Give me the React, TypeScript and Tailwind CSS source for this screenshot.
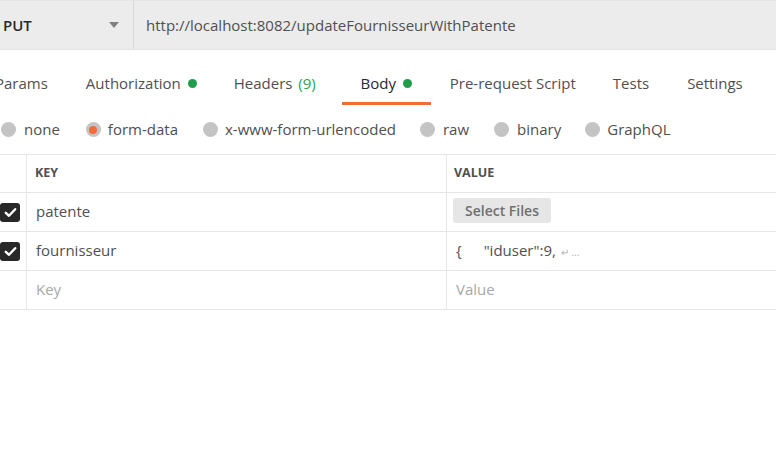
import React from "react";

function Radio({ selected }: { selected?: boolean }) {
  return (
    <span className="w-[15px] h-[15px] rounded-full bg-[#c4c4c4] flex items-center justify-center shrink-0">
      {selected && <span className="w-[8px] h-[8px] rounded-full bg-[#f26b3a]" />}
    </span>
  );
}

function Check() {
  return (
    <span className="w-[20px] h-[19px] rounded-[3px] bg-[#282828] flex items-center justify-center">
      <svg width="13" height="11" viewBox="0 0 13 11">
        <path d="M1.8 5.8 L5 8.8 L11.2 2.2" stroke="white" strokeWidth="2.4" fill="none" strokeLinecap="round" strokeLinejoin="round" />
      </svg>
    </span>
  );
}

function Row({ children, val, check }: { children: React.ReactNode; val: React.ReactNode; check?: boolean }) {
  return (
    <div className="flex h-[39px] border-b border-[#e6e6e6]">
      <div className="w-[27px] border-r border-[#e6e6e6] flex items-center">{check && <Check />}</div>
      <div className="w-[420px] border-r border-[#e6e6e6] flex items-center pl-[9px] pb-[2px]">{children}</div>
      <div className="flex-1 flex items-center pl-[6px] pb-[2px]">{val}</div>
    </div>
  );
}

export default function App() {
  return (
    <div className="w-[776px] h-[451px] bg-white overflow-hidden text-[15px] text-[#505050]" style={{ fontFamily: '"Open Sans", sans-serif' }}>
      <div className="h-[50px] bg-[#ececec] border-t border-[#e4e4e4] border-b border-[#d4d4d4] flex">
        <div className="w-[134px] border-r border-[#d9d9d9] flex items-center pl-[3px] pr-[14px]">
          <span className="text-[#282828] font-semibold text-[15px] flex-1">PUT</span>
          <svg width="10" height="6" viewBox="0 0 10 6"><path d="M0 0 H10 L5 6 Z" fill="#808080" /></svg>
        </div>
        <div className="flex items-center pl-[12px] text-[15px] text-[#505050]">http://localhost:8082/updateFournisseurWithPatente</div>
      </div>

      <div className="h-[54px] flex items-start pt-[22px] relative">
        <span className="ml-[-5px] leading-[22px]">Params</span>
        <span className="ml-[38px] leading-[22px] flex items-center">Authorization<span className="ml-[7px] w-[9px] h-[9px] rounded-full bg-[#1f9d4c]" /></span>
        <span className="ml-[37px] leading-[22px]">Headers <span className="ml-[2px] text-[#26a652]">(9)</span></span>
        <div className="ml-[26px] w-[89px] flex flex-col items-center">
          <span className="leading-[22px] text-[#282828] flex items-center">Body<span className="ml-[7px] w-[9px] h-[9px] rounded-full bg-[#1f9d4c]" /></span>
          <span className="mt-[8px] h-[3px] w-full bg-[#f26b3a]" />
        </div>
        <span className="ml-[19px] leading-[22px]">Pre-request Script</span>
        <span className="ml-[37px] leading-[22px]">Tests</span>
        <span className="ml-[38px] leading-[22px]">Settings</span>
      </div>

      <div className="h-[50px] flex items-center pt-[1px]">
        <span className="ml-[1px]"><Radio /></span>
        <span className="ml-[8px]">none</span>
        <span className="ml-[26px]"><Radio selected /></span>
        <span className="ml-[7px]">form-data</span>
        <span className="ml-[25px]"><Radio /></span>
        <span className="ml-[7px]">x-www-form-urlencoded</span>
        <span className="ml-[24px]"><Radio /></span>
        <span className="ml-[8px]">raw</span>
        <span className="ml-[25px]"><Radio /></span>
        <span className="ml-[8px]">binary</span>
        <span className="ml-[24px]"><Radio /></span>
        <span className="ml-[7px]">GraphQL</span>
      </div>

      <div className="border-t border-[#e6e6e6]">
        <div className="flex h-[38px] border-b border-[#e6e6e6]">
          <div className="w-[27px] border-r border-[#e6e6e6]" />
          <div className="w-[420px] border-r border-[#e6e6e6] flex items-center pl-[8px] text-[12.5px] font-bold text-[#505050]">KEY</div>
          <div className="flex-1 flex items-center pl-[7px] text-[12.5px] font-bold text-[#505050]">VALUE</div>
        </div>
        <Row check val={<span className="h-[25px] mb-[1px] px-[12px] rounded-[3px] bg-[#e6e6e6] text-[#707070] text-[14px] font-semibold flex items-center">Select Files</span>}>
          patente
        </Row>
        <Row check val={<span className="ml-[3px] text-[15px]">{"{"}<span className="ml-[22px]">"iduser":9,</span><span className="ml-[5px] text-[10px] text-[#b0b0b0]">↵ ...</span></span>}>
          fournisseur
        </Row>
        <Row val={<span className="ml-[3px] text-[#a8a8a8]">Value</span>}>
          <span className="text-[#a8a8a8]">Key</span>
        </Row>
      </div>
    </div>
  );
}
